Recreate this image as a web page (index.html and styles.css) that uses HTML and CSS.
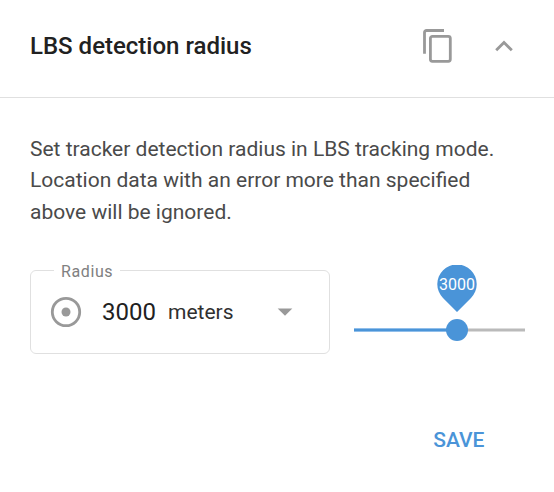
FILE: index.html
```html
<!DOCTYPE html>
<html lang="en">
<head>
<meta charset="utf-8">
<title>LBS detection radius</title>
<link rel="stylesheet" href="styles.css">
</head>
<body>
<section class="card">
  <header class="header">
    <h1 class="title">LBS detection radius</h1>
    <svg class="copy" viewBox="0 0 30 34"><path d="M1.500 24.700V3.500a2 2 0 0 1 2-2H21"/><rect x="7.400" y="7.300" width="19.900" height="25" rx="2"/></svg>
    <svg class="chevron" viewBox="0 0 18 12"><path d="M1.200 10.200L9 2.400l7.800 7.800"/></svg>
  </header>
  <div class="body">
    <p class="text">Set tracker detection radius in LBS tracking mode.<br>Location data with an error more than specified<br>above will be ignored.</p>
    <div class="controls">
      <fieldset class="field">
        <legend class="legend"><span class="legend-text">Radius</span></legend>
        <div class="row">
          <svg class="target" viewBox="0 0 32 32"><circle class="ring" cx="16" cy="16" r="13.700"/><circle class="dot" cx="16" cy="16" r="4.500"/></svg>
          <span class="value">3000</span>
          <span class="unit">meters</span>
          <svg class="caret" viewBox="0 0 16 8"><path d="M.7.500h14.600L8 7.800z"/></svg>
        </div>
      </fieldset>
      <div class="slider">
        <div class="bubble">
          <svg class="pin" viewBox="0 0 40 48"><path d="M20 47L6 33A19.700 19.700 0 1 1 34 33z"/></svg>
          <span class="pin-label">3000</span>
        </div>
        <div class="track"><div class="fill"></div><div class="thumb"></div></div>
      </div>
    </div>
    <div class="actions"><button class="save">SAVE</button></div>
  </div>
</section>
</body>
</html>
```
FILE: styles.css
```css
* { box-sizing: border-box; }
body { margin: 0; background: #fff; font-family: Roboto, sans-serif; }
.card { width: 554px; height: 492px; }
.header { display: flex; align-items: center; height: 98px; padding: 0 41px 6px 30px; border-bottom: 1px solid #e0e0e0; }
.title { margin: 0; flex: 1; font-size: 24px; font-weight: 500; color: #212121; }
.copy, .chevron { fill: none; stroke: #999; stroke-width: 2.800; }
.copy { width: 30px; height: 34px; margin-right: 42px; }
.chevron { width: 18px; height: 12px; }
.body { padding: 35.500px 29px 0 30px; }
.text { margin: 0; font-size: 21px; line-height: 31.500px; color: #4a4a4a; white-space: nowrap; }
.controls { display: flex; gap: 24px; margin-top: 33.500px; }
.field { width: 300px; height: 92px; margin: 0; padding: 0; border: 1px solid #e0e0e0; border-radius: 6px; }
.legend { margin-left: 23px; padding: 0 7px; font-size: 16px; line-height: 18px; letter-spacing: .6px; color: #808080; }
.legend-text { position: relative; top: 1px; }
.row { display: flex; align-items: center; height: 64px; padding-left: 19px; }
.target { width: 32px; height: 32px; }
.ring { fill: none; stroke: #999; stroke-width: 2.800; }
.dot { fill: #999; }
.value { width: 66px; margin-left: 20px; font-size: 24px; color: #212121; }
.unit { width: 109px; font-size: 21px; color: #303030; }
.caret { width: 16px; height: 8px; fill: #999; }
.slider { width: 171px; padding-top: 3px; }
.bubble { position: relative; width: 40px; height: 48px; margin-left: 83px; }
.pin { display: block; width: 40px; height: 48px; fill: #4a94d8; }
.pin-label { position: absolute; inset: 0 0 auto; text-align: center; font-size: 16px; line-height: 40px; color: #fff; }
.track { position: relative; height: 4px; margin-top: 15px; background: linear-gradient(#dcdcdc 1px, #bababa 1px 3px, #dcdcdc 3px); }
.fill { width: 103px; height: 4px; background: linear-gradient(#90beea 1px, #4a94d8 1px 3px, #90beea 3px); }
.thumb { position: absolute; left: 92px; top: -9px; width: 22px; height: 22px; border-radius: 50%; background: #4a94d8; }
.actions { display: flex; justify-content: flex-end; margin-top: 72px; padding-right: 40.500px; }
.save { padding: 0; border: 0; background: none; font: 500 21px/28px Roboto, sans-serif; color: #4a94d8; }
```
